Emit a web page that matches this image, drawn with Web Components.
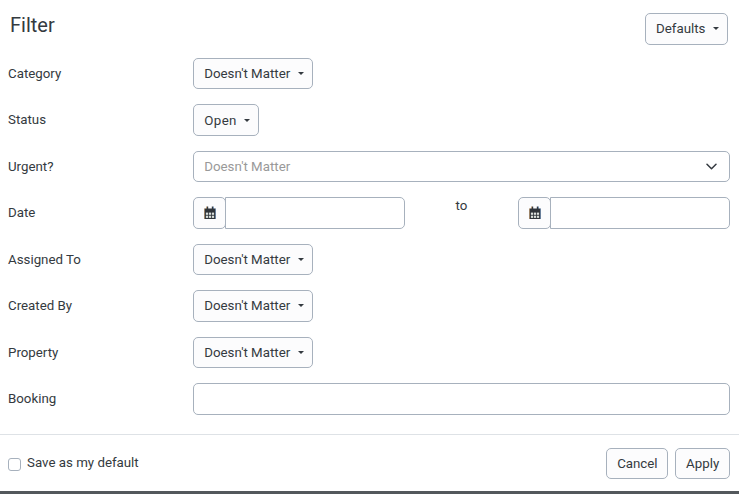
<!DOCTYPE html>
<html>
<head>
<meta charset="utf-8">
<style>
  html, body { margin: 0; height: 100%; background: #fff; overflow: hidden; }
  body { font: 13.3px/21px Roboto, "Liberation Sans", sans-serif; color: #343a40; }
</style>
</head>
<body>
<filter-dialog></filter-dialog>

<script>
const btnStyles = `
    .btn {
        display: inline-flex;
        align-items: center;
        box-sizing: border-box;
        height: 31.5px;
        padding: 0 9.75px;
        background: #fcfcfd;
        border: 1px solid #a7b1bd;
        border-radius: 5px;
        font: inherit;
        color: #343a40;
    }
`;

class DropBtn extends HTMLElement {
    constructor() {
        super();
        this.attachShadow({ mode: 'open' });
        this.shadowRoot.innerHTML = `
            <style>
                :host { display: inline-block; }
                ${btnStyles}
                .btn { padding: 0 8px 0 10.25px; }
                .caret {
                    margin-left: 7.5px;
                    border-top: 3.5px solid #343a40;
                    border-left: 3.5px solid transparent;
                    border-right: 3.5px solid transparent;
                }
            </style>
            <div class="btn"><slot></slot><span class="caret"></span></div>
        `;
    }
}
customElements.define('drop-btn', DropBtn);

class PlainBtn extends HTMLElement {
    constructor() {
        super();
        this.attachShadow({ mode: 'open' });
        this.shadowRoot.innerHTML = `
            <style>
                :host { display: inline-block; }
                ${btnStyles}
            </style>
            <div class="btn"><slot></slot></div>
        `;
    }
}
customElements.define('plain-btn', PlainBtn);

class FormRow extends HTMLElement {
    constructor() {
        super();
        this.attachShadow({ mode: 'open' });
        this.shadowRoot.innerHTML = `
            <style>
                :host {
                    display: grid;
                    grid-template-columns: 185px 1fr;
                    height: 31.5px;
                }
                .label { line-height: 31.2px; }
            </style>
            <div class="label"><slot name="label"></slot></div>
            <div><slot></slot></div>
        `;
    }
}
customElements.define('form-row', FormRow);

class TextBox extends HTMLElement {
    constructor() {
        super();
        this.attachShadow({ mode: 'open' });
        this.shadowRoot.innerHTML = `
            <style>
                :host {
                    display: block;
                    box-sizing: border-box;
                    height: 32px;
                    background: #fff;
                    border: 1px solid #a7b1bd;
                    border-radius: 5px;
                }
            </style>
        `;
    }
}
customElements.define('text-box', TextBox);

class SelectBox extends HTMLElement {
    constructor() {
        super();
        this.attachShadow({ mode: 'open' });
        this.shadowRoot.innerHTML = `
            <style>
                :host {
                    display: flex;
                    align-items: center;
                    justify-content: space-between;
                    box-sizing: border-box;
                    height: 31px;
                    padding: 0 12px 0 10.25px;
                    background: #fff;
                    border: 1px solid #a7b1bd;
                    border-radius: 5px;
                    color: #999;
                }
                svg { display: block; }
            </style>
            <slot></slot>
            <svg width="11" height="7" viewBox="0 0 11 7">
                <path d="M1 1.2l4.5 4.5 4.5-4.5" fill="none" stroke="#343a40" stroke-width="1.5" stroke-linecap="round" stroke-linejoin="round"/>
            </svg>
        `;
    }
}
customElements.define('select-box', SelectBox);

class DateBox extends HTMLElement {
    constructor() {
        super();
        this.attachShadow({ mode: 'open' });
        this.shadowRoot.innerHTML = `
            <style>
                :host { display: flex; height: 32px; }
                .icon {
                    display: flex;
                    align-items: center;
                    justify-content: center;
                    box-sizing: border-box;
                    flex: 0 0 33px;
                    background: #fcfcfd;
                    border: 1px solid #a7b1bd;
                    border-radius: 5px;
                }
                .field {
                    flex: 1;
                    margin-left: -0.75px;
                    background: #fff;
                    border: 1px solid #a7b1bd;
                    border-radius: 0 5px 5px 0;
                }
                svg { display: block; }
            </style>
            <div class="icon">
                <svg width="12" height="14" viewBox="0 0 12 14">
                    <rect x="0" y="2.5" width="0.6" height="10.5" fill="#d9913f"/>
                    <rect x="11.4" y="2.5" width="0.6" height="10.5" fill="#4d86c6"/>
                    <rect x="2.2" y="0.5" width="0.6" height="3" fill="#d9913f"/>
                    <rect x="9.2" y="0.5" width="0.6" height="3" fill="#4d86c6"/>
                    <rect x="2.8" y="0.5" width="1.4" height="3" fill="#343a40"/>
                    <rect x="7.8" y="0.5" width="1.4" height="3" fill="#343a40"/>
                    <path d="M0.6 2.5h10.8v10.5h-10.8z" fill="#2f343a"/>
                    <g fill="#dbe0dc">
                        <rect x="1.9" y="6.6" width="2.2" height="2.2"/>
                        <rect x="4.9" y="6.6" width="2.2" height="2.2"/>
                        <rect x="7.9" y="6.6" width="2.2" height="2.2"/>
                        <rect x="1.9" y="9.7" width="2.2" height="2.2"/>
                        <rect x="4.9" y="9.7" width="2.2" height="2.2"/>
                        <rect x="7.9" y="9.7" width="2.2" height="2.2"/>
                    </g>
                </svg>
            </div>
            <div class="field"></div>
        `;
    }
}
customElements.define('date-box', DateBox);

class FilterDialog extends HTMLElement {
    constructor() {
        super();
        this.attachShadow({ mode: 'open' });
        this.shadowRoot.innerHTML = `
            <style>
                :host {
                    display: flex;
                    flex-direction: column;
                    box-sizing: border-box;
                    height: 494px;
                    border-bottom: 3px solid #53585c;
                }
                header {
                    display: flex;
                    justify-content: space-between;
                    padding: 13px 11px 0 10px;
                    height: 57.9px;
                    box-sizing: border-box;
                }
                h1 { margin: 0; font-size: 20px; font-weight: 400; line-height: 24px; color: #343a40; }
                .rows {
                    display: flex;
                    flex-direction: column;
                    gap: 14.95px;
                    padding: 0 9px 0 8px;
                }
                .dates { display: grid; grid-template-columns: 212px 1fr 212px; margin-top: -0.4px; }
                .to { text-align: center; line-height: 17px; }
                .wide { letter-spacing: .4px; }
                footer {
                    display: flex;
                    justify-content: space-between;
                    margin-top: 19.5px;
                    padding: 13px 9px 0 8px;
                    border-top: 1px solid #dee2e6;
                }
                .save { display: flex; align-items: flex-start; gap: 6px; padding-top: 4px; }
                .box {
                    box-sizing: border-box;
                    width: 13px;
                    height: 13px;
                    margin-top: 6px;
                    background: #fff;
                    border: 1px solid #a7b1bd;
                    border-radius: 3px;
                }
                .actions { display: flex; gap: 7px; }
            </style>
            <header>
                <h1>Filter</h1>
                <drop-btn>Defaults</drop-btn>
            </header>
            <div class="rows">
                <form-row><span slot="label">Category</span><drop-btn>Doesn't Matter</drop-btn></form-row>
                <form-row><span slot="label">Status</span><drop-btn><span class="wide">Open</span></drop-btn></form-row>
                <form-row><span slot="label">Urgent?</span><select-box>Doesn't Matter</select-box></form-row>
                <form-row><span slot="label">Date</span>
                    <div class="dates">
                        <date-box></date-box>
                        <div class="to">to</div>
                        <date-box></date-box>
                    </div>
                </form-row>
                <form-row><span slot="label">Assigned To</span><drop-btn>Doesn't Matter</drop-btn></form-row>
                <form-row><span slot="label">Created By</span><drop-btn>Doesn't Matter</drop-btn></form-row>
                <form-row><span slot="label">Property</span><drop-btn>Doesn't Matter</drop-btn></form-row>
                <form-row><span slot="label">Booking</span><text-box></text-box></form-row>
            </div>
            <footer>
                <div class="save"><span class="box"></span><span>Save as my default</span></div>
                <div class="actions">
                    <plain-btn>Cancel</plain-btn>
                    <plain-btn>Apply</plain-btn>
                </div>
            </footer>
        `;
    }
}
customElements.define('filter-dialog', FilterDialog);
</script>
</body>
</html>
